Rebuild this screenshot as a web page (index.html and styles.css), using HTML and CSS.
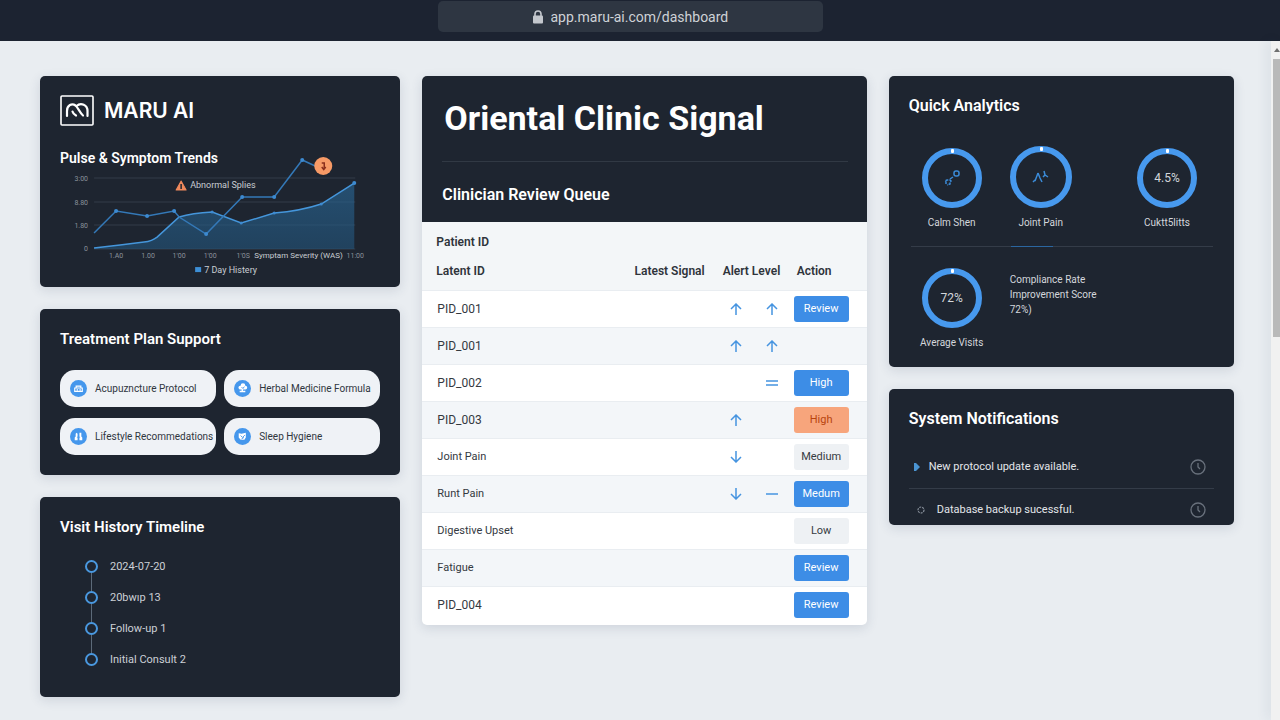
FILE: index.html
```html
<!DOCTYPE html>
<html lang="en">
<head>
  <meta charset="UTF-8" />
  <meta name="viewport" content="width=device-width, initial-scale=1.0"/>
  <title>Maru AI Dashboard</title>
  <link rel="stylesheet" href="styles.css">
</head>
<body>
  <header class="topbar">
    <label class="address" for="url">
      <svg class="lock" viewBox="0 0 12 14" aria-hidden="true">
        <path d="M3 6V4a3 3 0 0 1 6 0v2" fill="none" stroke="currentColor" stroke-width="1.6"/>
        <rect x="1" y="5.500" width="10" height="8" rx="1" fill="currentColor"/>
      </svg>
      <input type="text" id="url" aria-label="Address" value="app.maru-ai.com/dashboard" />
    </label>
  </header>

  <div class="page">
    <main class="dashboard">
      <div class="column">
        <section class="card trends">
          <div class="brand">
            <svg class="logo" viewBox="0 0 34 31" aria-hidden="true">
              <rect x="1" y="1" width="32" height="29" rx="1" fill="none" stroke="#fff" stroke-width="1.6"/>
              <g fill="none" stroke="#fff" stroke-width="2.2" stroke-linecap="round">
                <path d="M7 21V16c0-6 5-8 8.500-5.500C18 12.500 20 18 23 20.500"/>
                <path d="M12.500 16.500c.5 2 1.500 3 3.500 4"/>
                <path d="M16.500 11C21 7 27.500 10 27.500 16v5"/>
              </g>
            </svg>
            <span class="brand-name">MARU AI</span>
          </div>
          <h2>Pulse &amp; Symptom Trends</h2>
          <svg class="chart" viewBox="0 0 320 108" role="img" aria-label="Pulse and symptom trends">
            <defs>
              <linearGradient id="area" x1="0" y1="0" x2="0" y2="1">
                <stop offset="0" stop-color="#2a6b9c" stop-opacity="0.6"/>
                <stop offset="1" stop-color="#23557c" stop-opacity="0.6"/>
              </linearGradient>
            </defs>
            <path class="grid-line" d="M34 10H295M34 34H295M34 57H295M34 81H295"/>
            <path d="M34 80L60 77L84 74Q92 73 97 69L119 49Q132 45 152 44L181 55L214 45Q240 43 261 36L294 15V81H34Z" fill="url(#area)"/>
            <path class="line" d="M34 80L60 77L84 74Q92 73 97 69L119 49Q132 45 152 44L181 55L214 45Q240 43 261 36L294 15"/>
            <path class="line pulse" d="M34 65L56 43L87 48L114 43L119 49L146 66L182 29L214 29L242 -8L255 -2"/>
            <g class="dots">
              <circle cx="56" cy="43" r="2"/><circle cx="87" cy="48" r="2"/><circle cx="114" cy="43" r="2"/>
              <circle cx="146" cy="66" r="2"/><circle cx="182" cy="29" r="2"/><circle cx="214" cy="29" r="2"/>
              <circle cx="242" cy="-8" r="2"/><circle cx="294" cy="15" r="2"/>
              <circle cx="152" cy="44" r="1.500"/><circle cx="181" cy="55" r="1.500"/>
              <circle cx="214" cy="45" r="1.500"/><circle cx="261" cy="36" r="1.500"/>
            </g>
            <circle cx="263" cy="-2" r="9" fill="#f79a66"/>
            <path d="M261.500 -5h2.500v5M261.500 -1l2 2.500l2 -2.500" fill="none" stroke="#8a2f1c" stroke-width="1.500"/>
            <path d="M121 13L126 22H116Z" fill="#f0895c" stroke="#f0895c" stroke-linejoin="round"/>
            <path d="M121 16v5" stroke="#1f2530" stroke-width="1.500"/>
            <text class="note" x="130" y="20">Abnormal Splies</text>
            <g class="axis" text-anchor="end">
              <text x="28" y="13">3:00</text>
              <text x="28" y="37">8.80</text>
              <text x="28" y="60">1.80</text>
              <text x="28" y="83">0</text>
            </g>
            <g class="axis" text-anchor="middle">
              <text x="56" y="90">1.A0</text>
              <text x="88" y="90">1.00</text>
              <text x="119" y="90">1'00</text>
              <text x="150" y="90">1'00</text>
              <text x="183" y="90">1'0S</text>
              <text x="295" y="90">11:00</text>
            </g>
            <text class="note note-small" x="194" y="90">Symptam Severity (WAS)</text>
            <rect x="135" y="99" width="6" height="5" fill="#3d8fd6"/>
            <text class="note" x="144" y="105">7 Day Histery</text>
          </svg>
        </section>

        <section class="card treatment">
          <h2>Treatment Plan Support</h2>
          <div class="chips">
            <button class="chip">
              <svg viewBox="0 0 18 18" aria-hidden="true">
                <circle cx="9" cy="9" r="9" fill="#4597ec"/>
                <path d="M5 8.500h8v3.500H5zM6.500 8V6.500h5V8M7 10.500h1.500M10 10.500h1.500" fill="none" stroke="#fff" stroke-width="1.200"/>
              </svg>
              Acupuzncture Protocol
            </button>
            <button class="chip">
              <svg viewBox="0 0 18 18" aria-hidden="true">
                <circle cx="9" cy="9" r="9" fill="#4597ec"/>
                <path d="M5 9a2 2 0 0 1 2-3a2.500 2.500 0 0 1 5 0a2 2 0 0 1 0 4H9.500v1.500H12V13H6v-1.500h2V10H6z" fill="#fff"/>
                <path d="M8 7.500l1.500 1.500L11 7" fill="none" stroke="#4597ec"/>
              </svg>
              Herbal Medicine Formula
            </button>
            <button class="chip">
              <svg viewBox="0 0 18 18" aria-hidden="true">
                <circle cx="9" cy="9" r="9" fill="#4597ec"/>
                <path d="M7 5l1 1v3l-1 1h1v3H5v-3l1-1V6zM10 5h2v4l1 1v3h-3v-3h1l-1-1z" fill="#fff"/>
              </svg>
              Lifestyle Recommedations
            </button>
            <button class="chip">
              <svg viewBox="0 0 18 18" aria-hidden="true">
                <circle cx="9" cy="9" r="9" fill="#4597ec"/>
                <path d="M5 5.500l3 .5l4.500-1v5L11 12.500H7L5 10z" fill="#fff"/>
                <path d="M7 8l2 2l2.500-2.500M8 11.500L10.500 10" fill="none" stroke="#4597ec"/>
              </svg>
              Sleep Hygiene
            </button>
          </div>
        </section>

        <section class="card history">
          <h2>Visit History Timeline</h2>
          <ol class="timeline">
            <li>2024-07-20</li>
            <li>20bwıp 13</li>
            <li>Follow-up 1</li>
            <li>Initial Consult 2</li>
          </ol>
        </section>
      </div>

      <section class="card queue">
        <div class="queue-head">
          <h1>Oriental Clinic Signal</h1>
          <h2>Clinician Review Queue</h2>
        </div>
        <table>
          <colgroup>
            <col>
            <col class="col-signal">
            <col class="col-arrow">
            <col class="col-arrow">
            <col class="col-action">
          </colgroup>
          <thead>
            <tr class="head-top">
              <th colspan="5">Patient ID</th>
            </tr>
            <tr class="head-bottom">
              <th>Latent ID</th>
              <th class="signal">Latest Signal</th>
              <th class="level" colspan="2">Alert Level</th>
              <th class="action">Action</th>
            </tr>
          </thead>
          <tbody>
            <tr>
              <td>PID_001</td><td></td>
              <td class="arrow"><svg viewBox="0 0 12 12"><path d="M6 12V1M1 6l5-5l5 5"/></svg></td>
              <td class="arrow"><svg viewBox="0 0 12 12"><path d="M6 12V1M1 6l5-5l5 5"/></svg></td>
              <td><button class="btn">Review</button></td>
            </tr>
            <tr>
              <td>PID_001</td><td></td>
              <td class="arrow"><svg viewBox="0 0 12 12"><path d="M6 12V1M1 6l5-5l5 5"/></svg></td>
              <td class="arrow"><svg viewBox="0 0 12 12"><path d="M6 12V1M1 6l5-5l5 5"/></svg></td>
              <td></td>
            </tr>
            <tr>
              <td>PID_002</td><td></td>
              <td></td>
              <td class="arrow"><svg viewBox="0 0 12 12"><path d="M0 4h12M0 8h12"/></svg></td>
              <td><button class="btn">High</button></td>
            </tr>
            <tr>
              <td>PID_003</td><td></td>
              <td class="arrow"><svg viewBox="0 0 12 12"><path d="M6 12V1M1 6l5-5l5 5"/></svg></td>
              <td></td>
              <td><button class="btn btn-high">High</button></td>
            </tr>
            <tr class="symptom">
              <td>Joint Pain</td><td></td>
              <td class="arrow"><svg viewBox="0 0 12 12"><path d="M6 0v11M1 6l5 5l5-5"/></svg></td>
              <td></td>
              <td><button class="btn btn-muted">Medium</button></td>
            </tr>
            <tr class="symptom">
              <td>Runt Pain</td><td></td>
              <td class="arrow"><svg viewBox="0 0 12 12"><path d="M6 0v11M1 6l5 5l5-5"/></svg></td>
              <td class="arrow"><svg viewBox="0 0 12 12"><path d="M0 6h12"/></svg></td>
              <td><button class="btn">Medum</button></td>
            </tr>
            <tr class="symptom">
              <td>Digestive Upset</td><td></td><td></td><td></td>
              <td><button class="btn btn-muted">Low</button></td>
            </tr>
            <tr class="symptom">
              <td>Fatigue</td><td></td><td></td><td></td>
              <td><button class="btn">Review</button></td>
            </tr>
            <tr>
              <td>PID_004</td><td></td><td></td><td></td>
              <td><button class="btn">Review</button></td>
            </tr>
          </tbody>
        </table>
      </section>

      <div class="column">
        <section class="card analytics">
          <h2>Quick Analytics</h2>
          <div class="metrics">
            <div class="metric">
              <div class="ring">
                <svg viewBox="0 0 20 18" aria-hidden="true">
                  <g fill="none" stroke="#3b8bd8" stroke-width="1.500">
                    <rect x="12" y="2" width="5" height="5" rx="2"/>
                    <path d="M11 8L8 10"/>
                    <path d="M4 15v-2l-1-1l2-1h3l1 1l-1 1v2l-3 1" stroke-dasharray="3 1"/>
                  </g>
                </svg>
              </div>
              <span>Calm Shen</span>
            </div>
            <div class="metric">
              <div class="ring ring-large">
                <svg viewBox="0 0 20 18" aria-hidden="true">
                  <path d="M2 14l2-2M4 13l3-8M7 5l2 5l2 4M13 3l1 4M12 9l2-2l3 2" fill="none" stroke="#3b8bd8" stroke-width="1.500"/>
                </svg>
              </div>
              <span>Joint Pain</span>
            </div>
            <div class="metric metric-last">
              <div class="ring">4.5%</div>
              <span>Cuktt5litts</span>
            </div>
          </div>
          <div class="divider"></div>
          <div class="metrics">
            <div class="metric">
              <div class="ring">72%</div>
              <span>Average Visits</span>
            </div>
            <p class="summary">Compliance Rate<br>Improvement Score<br>72%)</p>
          </div>
        </section>

        <section class="card notifications">
          <h2>System Notifications</h2>
          <ul>
            <li>
              <svg class="marker" viewBox="0 0 8 8" aria-hidden="true"><path d="M1 0h2l4 4l-4 4H1z" fill="#4a94d2"/></svg>
              <span>New protocol update available.</span>
              <svg class="clock" viewBox="0 0 16 16" aria-hidden="true"><circle cx="8" cy="8" r="7"/><path d="M8 4v4l2 2"/></svg>
            </li>
            <li class="sub">
              <svg class="marker" viewBox="0 0 8 8" aria-hidden="true"><circle cx="4" cy="4" r="3" fill="none" stroke="#8b939e" stroke-width="1.200" stroke-dasharray="2 1"/></svg>
              <span>Database backup sucessful.</span>
              <svg class="clock" viewBox="0 0 16 16" aria-hidden="true"><circle cx="8" cy="8" r="7"/><path d="M8 4v4l2 2"/></svg>
            </li>
          </ul>
        </section>
      </div>
    </main>

    <div class="scrollbar" aria-hidden="true">
      <svg viewBox="0 0 9 18"><path d="M3 11L6 7L9 11Z" fill="#6f6f6f"/></svg>
      <div class="thumb"></div>
    </div>
  </div>
</body>
</html>
```
FILE: styles.css
```css
*,
*::before,
*::after {
  box-sizing: border-box;
}

body {
  background-color: #e9edf1;
  color: #e3e6ea;
  font-family: Roboto, 'Liberation Sans', sans-serif;
  font-size: 11px;
  display: flex;
  flex-direction: column;
  min-height: 100vh;
  margin: 0;
}

h1,
h2,
p,
ul,
ol {
  margin: 0;
  padding: 0;
}

h2 {
  color: #fff;
  font-size: 16px;
  font-weight: 600;
  line-height: 20px;
}

button,
input {
  font-family: inherit;
}

svg {
  display: block;
  flex-shrink: 0;
}

/* top bar */
.topbar {
  background-color: #1c2331;
  display: flex;
  justify-content: center;
  height: 41px;
  padding: 1px 20px 0 0;
}

.address {
  background-color: #2e3642;
  border-radius: 5px;
  color: #c3c7cd;
  display: flex;
  justify-content: center;
  align-items: center;
  gap: 7px;
  width: 385px;
  max-width: 100%;
  height: 31px;
}

.lock {
  width: 12px;
  height: 14px;
}

.address input {
  background: none;
  border: none;
  color: #ced2d7;
  font-size: 14px;
  width: 178px;
  padding: 0;
}

/* page */
.page {
  display: flex;
  flex: 1;
}

.dashboard {
  display: grid;
  grid-template-columns: 360fr 444fr 345fr;
  gap: 22px;
  align-items: start;
  flex: 1;
  padding: 35px 37px 22px 40px;
}

.column {
  display: flex;
  flex-direction: column;
  gap: 22px;
}

.card {
  background-color: #1e2530;
  border-radius: 5px;
  box-shadow: 0 3px 12px rgba(40, 60, 90, 0.14);
  padding: 20px;
}

/* trends */
.trends {
  padding: 19px 20px 11px;
}

.brand {
  display: flex;
  align-items: center;
  gap: 10px;
  margin-bottom: 22px;
}

.logo {
  width: 34px;
  height: 31px;
}

.brand-name {
  color: #fff;
  font-family: Inter, sans-serif;
  font-size: 21px;
  font-weight: 600;
  line-height: 30px;
}

.trends h2 {
  font-size: 14px;
}

.chart {
  width: 100%;
  overflow: visible;
}

.chart .grid-line {
  stroke: #333c48;
}

.chart .line {
  fill: none;
  stroke: #4596db;
  stroke-width: 1.5;
}

.chart .pulse {
  stroke: #3479b8;
}

.chart .dots {
  fill: #3d8ad0;
}

.chart .axis {
  fill: #8b929c;
  font-size: 7px;
}

.chart .note {
  fill: #c9cdd3;
  font-size: 9px;
}

.chart .note-small {
  font-size: 8px;
}

/* treatment plan */
.treatment h2,
.history h2 {
  font-size: 15px;
}

.chips {
  display: grid;
  grid-template-columns: 1fr 1fr;
  gap: 11px 8px;
  margin-top: 21px;
}

.chip {
  background-color: #eff2f6;
  border: none;
  border-radius: 15px;
  color: #30363e;
  display: flex;
  align-items: center;
  gap: 8px;
  font-size: 10px;
  height: 37px;
  padding: 0 0 0 10px;
  white-space: nowrap;
  cursor: pointer;
}

.chip svg {
  width: 17px;
  height: 17px;
}

/* timeline */
.history {
  padding-bottom: 22px;
}

.timeline {
  list-style: none;
  margin-top: 14px;
  padding-left: 25px;
}

.timeline li {
  display: flex;
  align-items: center;
  gap: 12px;
  height: 31px;
  position: relative;
  color: #ccd0d6;
}

.timeline li::before {
  content: "";
  width: 13px;
  height: 13px;
  border: 2px solid #4a98df;
  border-radius: 50%;
}

.timeline li:not(:last-child)::after {
  content: "";
  position: absolute;
  left: 6px;
  top: 22px;
  height: 18px;
  width: 1px;
  background-color: #5c6a79;
}

/* review queue */
.queue {
  background-color: #fff;
  overflow: hidden;
  padding: 0 0 2px;
}

.queue-head {
  background-color: #1e2530;
  padding: 20px 19px 17px 20px;
}

.queue-head h1 {
  border-bottom: 1px solid #313944;
  color: #fff;
  font-size: 34px;
  line-height: 44px;
  padding: 0 2px 21px;
  margin-bottom: 23px;
}

table {
  border-collapse: collapse;
  table-layout: fixed;
  width: 100%;
}

.col-signal {
  width: 100px;
}

.col-arrow {
  width: 36px;
}

.col-action {
  width: 77px;
}

thead {
  background-color: #f3f6f8;
  color: #2f343b;
}

tbody {
  color: #34393f;
}

th {
  font-size: 12px;
  font-weight: 600;
  text-align: left;
  height: 34px;
  padding: 0 0 0 14px;
}

.head-top th {
  padding-top: 6px;
}

.head-bottom th {
  padding-bottom: 4px;
}

th.signal {
  text-align: right;
  padding-left: 0;
  padding-right: 13px;
}

th.level {
  padding-left: 5px;
}

th.action {
  padding-left: 7px;
}

td {
  border-top: 1px solid #e9edf1;
  font-size: 12px;
  height: 37px;
  padding: 0;
}

td:first-child {
  padding-left: 15px;
}

.symptom td {
  font-size: 11px;
}

td:last-child {
  padding-left: 4px;
}

tbody tr:nth-child(even) {
  background-color: #f3f6f9;
}

.arrow svg {
  width: 12px;
  height: 12px;
  margin: 0 auto;
  fill: none;
  stroke: #4694e0;
  stroke-width: 1.5;
}

.btn {
  background-color: #3d8de6;
  border: none;
  border-radius: 3px;
  color: #fff;
  display: block;
  font-size: 11px;
  width: 55px;
  height: 26px;
  padding: 0;
  cursor: pointer;
}

.btn-high {
  background-color: #f7a57c;
  color: #b8440f;
}

.btn-muted {
  background-color: #eef1f4;
  color: #363b42;
}

/* analytics */
.analytics {
  padding-bottom: 17px;
}

.metrics {
  display: flex;
  gap: 3px;
  padding-right: 4px;
}

.analytics h2 + .metrics {
  margin-top: 30px;
  align-items: flex-end;
}

.metric {
  display: flex;
  flex-direction: column;
  align-items: center;
  gap: 8px;
  line-height: 14px;
  width: 86px;
  font-size: 10px;
  color: #d4d7dc;
}

.metric-last {
  margin-left: auto;
}

.ring {
  border: 6px solid #4799ee;
  border-radius: 50%;
  display: flex;
  justify-content: center;
  align-items: center;
  font-size: 12px;
  width: 60px;
  height: 60px;
  position: relative;
}

.ring-large {
  width: 62px;
  height: 62px;
}

.ring::before {
  content: "";
  position: absolute;
  top: -5px;
  left: calc(50% - 1px);
  width: 3px;
  height: 4px;
  border-radius: 1px;
  background-color: #fff;
}

.ring svg {
  width: 20px;
  height: 18px;
}

.divider {
  height: 1px;
  margin: 16px 1px 21px 2px;
  background: linear-gradient(to right, #343c48 33%, #2b66a0 33%, #2b66a0 47%, #343c48 47%);
}

.summary {
  padding: 4px 0 0 12px;
  font-size: 10px;
  line-height: 15px;
  color: #d4d7dc;
}

/* notifications */
.notifications {
  padding-bottom: 0;
}

.notifications ul {
  list-style: none;
  margin-top: 17px;
}

.notifications li {
  display: flex;
  align-items: center;
  font-size: 11px;
  line-height: 18px;
  gap: 8px;
  padding: 12px 8px 12px 4px;
}

.notifications li.sub {
  border-top: 1px solid #343c48;
  gap: 12px;
  padding: 12px 8px 6px;
}

.marker {
  width: 8px;
  height: 8px;
}

.clock {
  width: 16px;
  height: 16px;
  margin-left: auto;
  fill: none;
  stroke: #69717c;
  stroke-width: 1.3;
}

/* scrollbar */
.scrollbar {
  background-color: #f1f1f1;
  display: flex;
  flex-direction: column;
  width: 9px;
  box-shadow: -4px 0 12px rgba(40, 60, 90, 0.08);
}

.scrollbar svg {
  width: 9px;
  height: 18px;
}

.thumb {
  background-color: #b9b9b9;
  height: 41%;
  margin-left: 2px;
}
```
